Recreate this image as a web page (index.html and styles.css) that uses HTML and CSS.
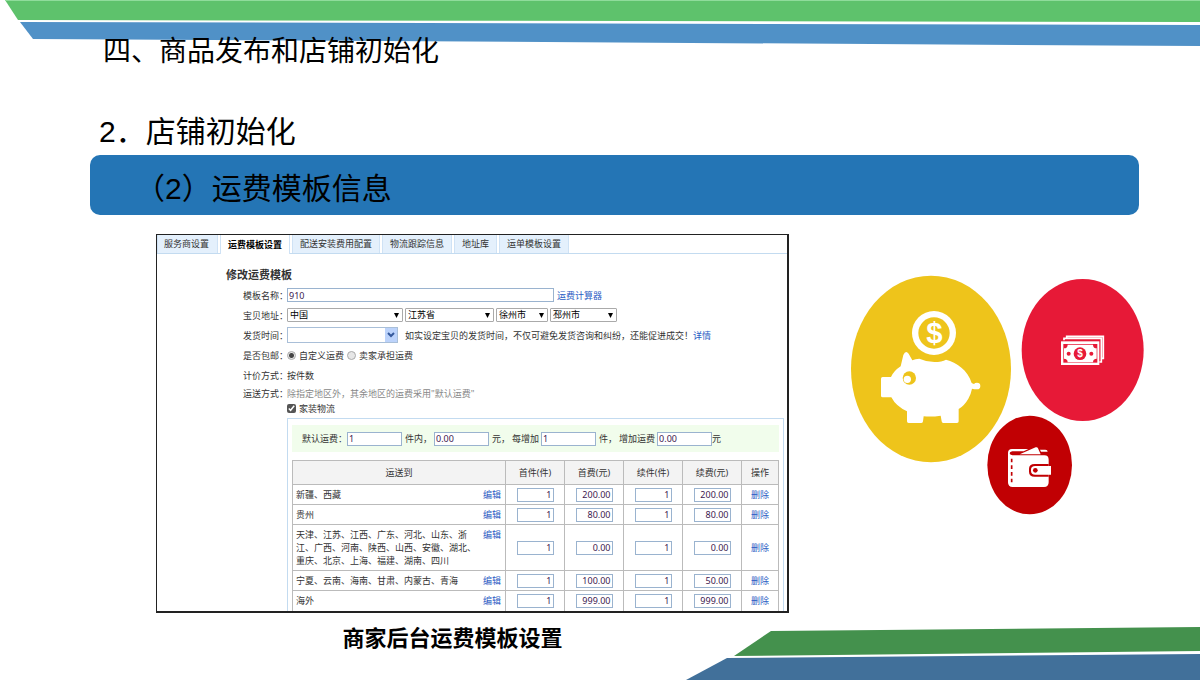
FILE: index.html
```html
<!DOCTYPE html>
<html lang="zh-CN">
<head>
<meta charset="utf-8">
<meta name="viewport" content="width=device-width, initial-scale=1">
<title>商家后台运费模板设置</title>
<link rel="stylesheet" href="styles.css">
</head>
<body>
<main class="slide">
  <svg class="ribbon ribbon-top" viewBox="0 0 1200 50" preserveAspectRatio="none" aria-hidden="true">
    <polygon points="5,0 1200,0 1200,22 18,20" fill="#5ec26c"/>
    <polygon points="5,0 1200,0 1200,1 5,1" fill="#8fdc9b"/>
    <polygon points="20,22 1200,25 1200,46 33,39" fill="#5091c7"/>
  </svg>
  <svg class="ribbon ribbon-bottom" viewBox="0 0 1200 60" preserveAspectRatio="none" aria-hidden="true">
    <polygon points="771,11 1200,7 1200,31 734,36" fill="#44914d"/>
    <polygon points="727,38 1200,34 1200,60 686,60" fill="#41709a"/>
  </svg>

  <header class="heading">
    <h1 class="chapter">四、商品发布和店铺初始化</h1>
    <h2 class="section">2．店铺初始化</h2>
  </header>
  <h3 class="banner">（2）运费模板信息</h3>

  <div class="content">
    <figure class="figure">
      <div class="panel">
        <nav class="tabs">
          <button class="tab tab-first" type="button">服务商设置</button>
          <button class="tab tab-active" type="button">运费模板设置</button>
          <button class="tab" type="button">配送安装费用配置</button>
          <button class="tab" type="button">物流跟踪信息</button>
          <button class="tab" type="button">地址库</button>
          <button class="tab" type="button">运单模板设置</button>
        </nav>
        <form class="form">
          <h4 class="form-title">修改运费模板</h4>
          <div class="row">
            <label class="label" for="name">模板名称：</label>
            <input class="box name" id="name" type="text" value="910">
            <a class="link after" href="#calc">运费计算器</a>
          </div>
          <div class="row">
            <label class="label" for="country">宝贝地址：</label>
            <div class="selects">
              <span class="pick pick-country"><select id="country"><option>中国</option></select></span>
              <span class="pick pick-province"><select aria-label="省"><option>江苏省</option></select></span>
              <span class="pick pick-city"><select aria-label="市"><option>徐州市</option></select></span>
              <span class="pick pick-county"><select aria-label="县"><option>邳州市</option></select></span>
            </div>
          </div>
          <div class="row">
            <label class="label" for="time">发货时间：</label>
            <span class="combo">
              <input id="time" type="text">
              <button class="combo-button" type="button" aria-label="展开"><svg viewBox="0 0 12 14" aria-hidden="true"><path d="M3 5l3 3 3-3" fill="none" stroke="#35599c" stroke-width="2"/></svg></button>
            </span>
            <span class="hint">如实设定宝贝的发货时间，不仅可避免发货咨询和纠纷，还能促进成交！<a class="link" href="#detail">详情</a></span>
          </div>
          <div class="row">
            <span class="label">是否包邮：</span>
            <label class="option"><input class="radio" type="radio" name="pay" checked>自定义运费</label>
            <label class="option"><input class="radio" type="radio" name="pay">卖家承担运费</label>
          </div>
          <div class="row">
            <span class="label">计价方式：</span><span>按件数</span>
          </div>
          <div class="row row-short">
            <span class="label">运送方式：</span><span class="muted">除指定地区外，其余地区的运费采用"默认运费"</span>
          </div>
          <div class="row row-check">
            <label class="option"><input class="check" type="checkbox" checked>家装物流</label>
          </div>
          <div class="rates">
            <div class="defaults">
              <label for="d1">默认运费：</label><input class="box fee" id="d1" type="text" value="1">
              <label class="unit" for="d2">件内，</label><input class="box fee" id="d2" type="text" value="0.00">
              <label class="unit more" for="d3">元，<span>每增加</span></label><input class="box fee" id="d3" type="text" value="1">
              <label class="unit more" for="d4">件，<span>增加运费</span></label><input class="box fee" id="d4" type="text" value="0.00"><span>元</span>
            </div>
            <table class="table">
              <colgroup><col><col class="col-num"><col class="col-num"><col class="col-num"><col class="col-num"><col class="col-act"></colgroup>
              <thead>
                <tr><th>运送到</th><th>首件(件)</th><th>首费(元)</th><th>续件(件)</th><th>续费(元)</th><th>操作</th></tr>
              </thead>
              <tbody>
                <tr>
                  <td><div class="area"><span>新疆、西藏</span><a class="link" href="#edit">编辑</a></div></td>
                  <td><input class="box num" aria-label="首件" value="1"></td><td><input class="box num" aria-label="首费" value="200.00"></td>
                  <td><input class="box num" aria-label="续件" value="1"></td><td><input class="box num" aria-label="续费" value="200.00"></td>
                  <td><a class="link" href="#del">删除</a></td>
                </tr>
                <tr>
                  <td><div class="area"><span>贵州</span><a class="link" href="#edit">编辑</a></div></td>
                  <td><input class="box num" aria-label="首件" value="1"></td><td><input class="box num" aria-label="首费" value="80.00"></td>
                  <td><input class="box num" aria-label="续件" value="1"></td><td><input class="box num" aria-label="续费" value="80.00"></td>
                  <td><a class="link" href="#del">删除</a></td>
                </tr>
                <tr>
                  <td><div class="area"><span>天津、江苏、江西、广东、河北、山东、浙<br>江、广西、河南、陕西、山西、安徽、湖北、<br>重庆、北京、上海、福建、湖南、四川</span><a class="link" href="#edit">编辑</a></div></td>
                  <td><input class="box num" aria-label="首件" value="1"></td><td><input class="box num" aria-label="首费" value="0.00"></td>
                  <td><input class="box num" aria-label="续件" value="1"></td><td><input class="box num" aria-label="续费" value="0.00"></td>
                  <td><a class="link" href="#del">删除</a></td>
                </tr>
                <tr>
                  <td><div class="area"><span>宁夏、云南、海南、甘肃、内蒙古、青海</span><a class="link" href="#edit">编辑</a></div></td>
                  <td><input class="box num" aria-label="首件" value="1"></td><td><input class="box num" aria-label="首费" value="100.00"></td>
                  <td><input class="box num" aria-label="续件" value="1"></td><td><input class="box num" aria-label="续费" value="50.00"></td>
                  <td><a class="link" href="#del">删除</a></td>
                </tr>
                <tr>
                  <td><div class="area"><span>海外</span><a class="link" href="#edit">编辑</a></div></td>
                  <td><input class="box num" aria-label="首件" value="1"></td><td><input class="box num" aria-label="首费" value="999.00"></td>
                  <td><input class="box num" aria-label="续件" value="1"></td><td><input class="box num" aria-label="续费" value="999.00"></td>
                  <td><a class="link" href="#del">删除</a></td>
                </tr>
              </tbody>
            </table>
          </div>
        </form>
      </div>
      <figcaption class="caption">商家后台运费模板设置</figcaption>
    </figure>

    <svg class="art" viewBox="0 0 294 241" role="img" aria-label="存钱罐、钞票、钱包">
      <g transform="translate(-10 -10) scale(.33333)">
        <ellipse cx="273" cy="312" rx="240" ry="280" fill="#eec41b"/>
        <circle cx="282" cy="204" r="66" fill="#fff"/>
        <circle cx="282" cy="204" r="47" fill="#eec41b"/>
        <text class="dollar" x="283" y="235" font-size="88" fill="#fff">$</text>
        <path fill="#fff" d="M123 341q0-5 5-5h25q8-18 29-32l8-34q7-16 16-4l11 20q9-5 21-5q22 10 45 10t35-7c32 8 66 32 77 70q3 2 7 3q3-4 9-4a10 10 0 0 1 0 20q-9 0-15-2q-3 16-11 30q-12 21-29 31v37q0 5-5 5h-41q-5 0-5-5l-3-17q-25 4-51 2l-2 15q0 5-5 5h-38q-5 0-5-5v-30q-33-15-47-42h-26q-5 0-5-5z"/>
        <circle cx="208" cy="339" r="20" fill="#eec41b"/>
        <circle cx="202" cy="343" r="11" fill="#fff"/>
      </g>
      <g transform="translate(130 -5) scale(.33333)">
        <ellipse cx="308" cy="240" rx="183" ry="213" fill="#e71937"/>
        <path d="M260 203v-4h110v66h-6M252 211v-6h112v71h-6" fill="none" stroke="#fff" stroke-width="5"/>
        <rect x="243" y="214" width="115" height="71" fill="#fff"/>
        <rect x="250" y="222" width="102" height="56" fill="#e71937"/>
        <path fill="#fff" d="M263 224h76q0 11 11 11v31q-11 0-11 11h-76q0-11-11-11v-31q11 0 11-11z"/>
        <circle cx="300" cy="251" r="19" fill="#e71937"/>
        <circle cx="266" cy="251" r="6" fill="#e71937"/>
        <circle cx="334" cy="251" r="6" fill="#e71937"/>
        <text class="dollar" x="300" y="261" font-size="30" fill="#fff">$</text>
        <ellipse cx="149" cy="585" rx="127" ry="148" fill="#c10003"/>
        <path fill="#fff" d="M84 549q0-12 12-12h49l-14 7H97q-8 1-8 6t8 6h96q13 0 13 13v68q0 14-14 14H98q-14 0-14-14z"/>
        <path fill="#fff" d="M119 553l48-21q5-2 7 3l8 18zM180 539h16q7 0 7 6h-20z"/>
        <path fill="#c10003" d="M206 582h-42q-17 0-17 15v8q0 15 17 15h42z"/>
        <path fill="#fff" d="M213 588v26h-47q-13 0-13-11v-4q0-11 13-11z"/>
        <circle cx="166" cy="601" r="7" fill="#c10003"/>
        <path d="M95 566v72" stroke="#c10003" stroke-width="5" stroke-dasharray="11 9"/>
      </g>
    </svg>
  </div>
</main>
</body>
</html>
```

FILE: styles.css
```css
* {
  box-sizing: border-box;
}

body {
  margin: 0;
  background: #fff;
  color: #000;
  font-family: "Liberation Sans", "Noto Sans CJK SC", sans-serif;
}

h1, h2, h3, h4, figure {
  margin: 0;
  font-weight: 400;
}

.slide {
  position: relative;
  display: flex;
  flex-direction: column;
  min-height: 100vh;
  padding-top: 32px;
  overflow: hidden;
}

.ribbon {
  position: absolute;
  left: 0;
  width: 100%;
  z-index: -1;
}

.ribbon-top {
  top: 0;
  height: 50px;
}

.ribbon-bottom {
  bottom: 0;
  height: 60px;
}

.heading {
  padding-left: 99px;
}

.chapter {
  padding-left: 4px;
  font-size: 28px;
  line-height: 40px;
}

.section {
  margin-top: 40px;
  font-size: 30px;
  line-height: 40px;
}

.banner {
  margin: 3px 61px 0 90px;
  padding: 8px 0 0 45px;
  border-radius: 10px;
  background: #2475b5;
  font-size: 30px;
  line-height: 52px;
}

.content {
  display: grid;
  grid-template-columns: 633fr 294fr;
  column-gap: 61px;
  align-items: start;
  padding: 19px 56px 0 156px;
}

.art {
  width: 100%;
  margin-top: 41px;
}

.dollar {
  font-family: "Liberation Sans", sans-serif;
  font-weight: 700;
  text-anchor: middle;
}

.caption {
  margin-top: 9px;
  padding-right: 40px;
  font-size: 22px;
  font-weight: 700;
  line-height: 34px;
  text-align: center;
}

.panel {
  border: 2px solid #222;
  border-width: 1px 2px 2px 1px;
  overflow: hidden;
  color: #333;
  font-family: "Noto Sans", "Noto Sans CJK SC", sans-serif;
  font-size: 9px;
  line-height: 13px;
  white-space: nowrap;
}

.panel input,
.panel select,
.panel button {
  margin: 0;
  font: inherit;
}

.tabs {
  display: flex;
  gap: 2px;
  height: 19px;
  border-bottom: 1px solid #c3dbf0;
}

.tabs .tab {
  padding: 0 7px;
  border: 1px solid #cfe2f5;
  border-width: 0 1px;
  background: #e4f0fc;
  color: #333;
  line-height: 18px;
}

.tabs .tab-first {
  padding: 0 8px 0 6px;
}

.tabs .tab-active {
  height: 19px;
  background: #fff;
  color: #000;
  font-weight: 700;
}

.form {
  padding: 13px 3px 0 69px;
}

.form-title {
  font-size: 11px;
  font-weight: 700;
  line-height: 16px;
  margin-bottom: 2px;
}

.row {
  display: flex;
  align-items: center;
  height: 20px;
  padding-left: 17px;
}

.row-short {
  height: 17px;
}

.row-check {
  height: 12px;
  padding-left: 61px;
}

.label {
  width: 44px;
}

.box {
  height: 14px;
  padding: 0 1px;
  border: 1px solid #9ab3cf;
  background: #fff;
  color: #402050;
}

.name {
  width: 267px;
}

.link {
  color: #2a5cc4;
  text-decoration: none;
}

.after {
  margin-left: 3px;
}

.selects {
  display: flex;
  gap: 2px;
}

.pick {
  position: relative;
}

.pick::after {
  content: "";
  position: absolute;
  right: 4px;
  top: 5px;
  width: 5px;
  height: 5px;
  background: #000;
  clip-path: polygon(0 0, 100% 0, 50% 100%);
  pointer-events: none;
}

.pick select {
  display: block;
  width: 100%;
  height: 14px;
  padding: 0 2px;
  border: 1px solid #aaa;
  border-radius: 1px;
  background: #fff;
  color: #000;
  line-height: 12px;
  appearance: none;
}

.pick-country {
  width: 116px;
}

.pick-province {
  width: 89px;
}

.pick-city {
  width: 52px;
}

.pick-county {
  width: 67px;
}

.combo {
  display: flex;
  width: 111px;
  height: 16px;
  border: 1px solid #a9bfd8;
}

.combo input {
  flex: 1;
  min-width: 0;
  border: 0;
  padding: 0 2px;
}

.combo-button {
  width: 12px;
  padding: 0;
  border: 0;
  background: #bcd3fb;
}

.combo-button svg {
  display: block;
  width: 12px;
  height: 14px;
}

.hint {
  margin-left: 7px;
}

.option {
  display: flex;
  align-items: center;
  gap: 3px;
  margin-right: 3px;
}

.radio {
  width: 9px;
  height: 9px;
  border: 1px solid #aaa;
  border-radius: 50%;
  background: #e6e6e6;
  appearance: none;
}

.radio:checked {
  background: radial-gradient(circle, #444 0 2px, #e6e6e6 3px);
}

.check {
  width: 9px;
  height: 9px;
  accent-color: #555;
}

.muted {
  color: #888;
}

.rates {
  margin: 4px 0 0 61px;
  padding: 6px 4px 0 4px;
  border: 1px solid #c3dbf0;
  border-bottom: 0;
}

.defaults {
  display: flex;
  align-items: center;
  height: 27px;
  margin-bottom: 8px;
  padding-left: 10px;
  background: #f1fdec;
}

.fee {
  width: 55px;
}

.unit {
  padding: 0 2px 0 3px;
}

.more {
  display: flex;
  gap: 2px;
}

.table {
  width: 100%;
  border-collapse: collapse;
  table-layout: fixed;
}

.col-num {
  width: 59px;
}

.col-act {
  width: 37px;
}

.table th,
.table td {
  padding: 0;
  border: 1px solid #bbb;
  text-align: center;
}

.table th {
  height: 24px;
  background: #f3f3f3;
  font-weight: 400;
}

.table td {
  height: 20px;
}

.table tr:last-child td {
  border-bottom: 0;
}

.area {
  display: flex;
  justify-content: space-between;
  padding: 3px 4px 3px 3px;
  text-align: left;
}

.panel .num {
  display: block;
  width: 37px;
  margin: 0 auto;
  text-align: right;
}
```
